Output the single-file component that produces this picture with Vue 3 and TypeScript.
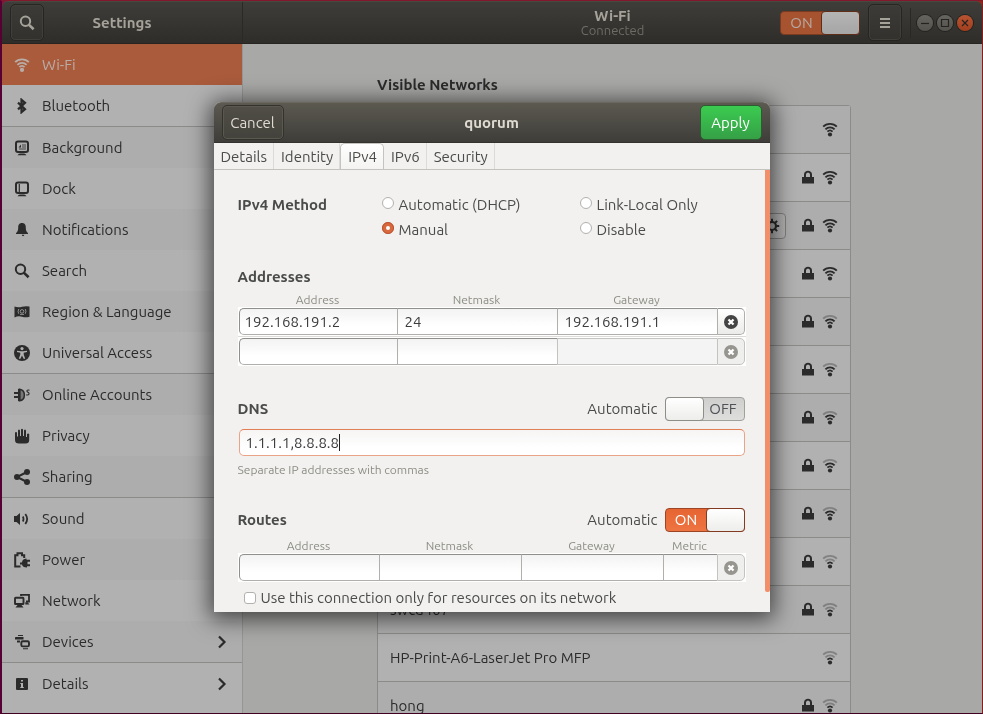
<script setup lang="ts">
import { ref } from 'vue'

interface Panel { name: string; icon: string; more?: boolean; last?: boolean }
interface Network { name?: string; locked: boolean; level: number; active?: boolean }

const panels: Panel[] = [
  { name: 'Wi-Fi', icon: 'wifi' },
  { name: 'Bluetooth', icon: 'bluetooth', last: true },
  { name: 'Background', icon: 'background' },
  { name: 'Dock', icon: 'dock' },
  { name: 'Notifications', icon: 'bell' },
  { name: 'Search', icon: 'search' },
  { name: 'Region & Language', icon: 'flag' },
  { name: 'Universal Access', icon: 'access', last: true },
  { name: 'Online Accounts', icon: 'accounts' },
  { name: 'Privacy', icon: 'hand' },
  { name: 'Sharing', icon: 'share', last: true },
  { name: 'Sound', icon: 'sound' },
  { name: 'Power', icon: 'power' },
  { name: 'Network', icon: 'network' },
  { name: 'Devices', icon: 'devices', more: true, last: true },
  { name: 'Details', icon: 'info', more: true },
]
const selected = ref('Wi-Fi')

const networks: Network[] = [
  { locked: false, level: 3 },
  { locked: true, level: 3 },
  { locked: true, level: 3, active: true },
  { locked: true, level: 3 },
  { locked: true, level: 2 },
  { locked: true, level: 2 },
  { locked: true, level: 2 },
  { locked: true, level: 2 },
  { locked: true, level: 2 },
  { locked: true, level: 1 },
  { name: 'swcd407', locked: true, level: 1 },
  { name: 'HP-Print-A6-LaserJet Pro MFP', locked: false, level: 1 },
  { name: 'hong', locked: true, level: 1 },
]

const tabs = ['Details', 'Identity', 'IPv4', 'IPv6', 'Security']
const tab = ref('IPv4')
const methods = ['Automatic (DHCP)', 'Link-Local Only', 'Manual', 'Disable']
const method = ref('Manual')

const addressColumns = ['Address', 'Netmask', 'Gateway']
const addresses = ref([
  ['192.168.191.2', '24', '192.168.191.1'],
  ['', '', ''],
])
const routeColumns = ['Address', 'Netmask', 'Gateway', 'Metric']
const route = ref(['', '', '', ''])

const wifiOn = ref(true)
const dns = ref('1.1.1.1,8.8.8.8')
const dnsAuto = ref(false)
const routesAuto = ref(true)
const onlyOwn = ref(false)
</script>

<template>
  <svg class="sprite" aria-hidden="true">
    <symbol id="wifi" viewBox="0 0 16 16">
      <g fill="none" stroke="currentColor" stroke-width="1.8">
        <path d="M1.2 5.2C4.6 1.4 11.4 1.4 14.8 5.2" />
        <path d="M3.4 7.9C6 5.2 10 5.2 12.6 7.9" />
        <path d="M5.4 10.2C7 8.6 9 8.6 10.6 10.2" />
      </g>
      <circle cx="8" cy="12.9" r="2.1" fill="currentColor" />
    </symbol>
    <symbol id="bluetooth" viewBox="0 0 16 16">
      <path d="M4 4.6L11 11.2L7.5 14.2V1.8L11 4.8L4 11.4" fill="none" stroke="currentColor" stroke-width="2.2" />
    </symbol>
    <symbol id="background" viewBox="0 0 16 16">
      <rect x="2" y="1.6" width="12" height="10.4" rx="2" fill="none" stroke="currentColor" stroke-width="2" />
      <path d="M8 4H12V10H5V8H8Z" opacity=".4" fill="currentColor" />
      <path d="M4.5 7.5L7 4.5V7.5ZM3.5 15.2Q4.5 13.5 6 13.5H10Q11.5 13.5 12.5 15.2Z" fill="currentColor" />
    </symbol>
    <symbol id="dock" viewBox="0 0 16 16">
      <rect x="2" y="1.6" width="12" height="10.4" rx="2" fill="none" stroke="currentColor" stroke-width="2" />
      <path d="M5.3 3V11" stroke="currentColor" stroke-width="1.2" />
      <path d="M3.5 15.2Q4.5 13.5 6 13.5H10Q11.5 13.5 12.5 15.2Z" fill="currentColor" />
    </symbol>
    <symbol id="bell" viewBox="0 0 16 16">
      <path d="M8 1C5 1 4.2 3.2 4.2 5.5C4.2 9 3.4 9.8 2 11V12H14V11C12.6 9.8 11.8 9 11.8 5.5C11.8 3.2 11 1 8 1ZM7.8 12.8H10.4Q10.2 14.2 9 14.2Q8 14.2 7.800 12.800Z" fill="currentColor" />
    </symbol>
    <symbol id="search" viewBox="0 0 16 16">
      <circle cx="6.5" cy="6.3" r="4.7" fill="none" stroke="currentColor" stroke-width="2" />
      <path d="M9.8 9.6L14.6 14.3" stroke="currentColor" stroke-width="2.6" />
    </symbol>
    <symbol id="flag" viewBox="0 0 16 16">
      <path d="M.5 2.5Q4 4 8 2.8T15.5 2.6V12.7Q12 13.8 8 12.7T.5 13.5Z" fill="currentColor" />
      <g fill="none" stroke="#aaa" stroke-width=".8">
        <circle cx="8" cy="7.4" r="1.8" />
        <path d="M4.8 5Q3.300 7.400 4.800 9.800M11.200 5Q12.700 7.400 11.200 9.800M6 10.400H10" />
      </g>
    </symbol>
    <symbol id="access" viewBox="0 0 16 16">
      <circle cx="8" cy="8" r="8" fill="currentColor" />
      <circle cx="8" cy="3.6" r="1.6" fill="#b1b1b1" />
      <path d="M3 5.700L6.800 6.200H9.200L13 5.700V7.100L9.700 7.800V9.500L11.200 13.700H9.600L8 10.500L6.400 13.700H4.800L6.300 9.500V7.800L3 7.100Z" fill="#b1b1b1" />
    </symbol>
    <symbol id="accounts" viewBox="0 0 16 16">
      <path d="M5.5 2.200V13.800C12 13 12 3 5.500 2.200Z" fill="#777" stroke="currentColor" stroke-width="1.500" />
      <path d="M0 5H5V7H0ZM0 9H5V11H0ZM4 2H6.500V14H4Z" fill="currentColor" />
      <path d="M15.500 3.200C13 2.400 12 4.300 14 5.300S15 8.700 12.200 7.700" fill="none" stroke="currentColor" stroke-width="1.100" />
    </symbol>
    <symbol id="hand" viewBox="0 0 16 16">
      <path d="M1 4.500Q2 3.500 3 4.500V8.500H4V2.500Q5 .6 6 2.500V8H7V1.500Q8 .2 9 1.500V8H10V2.500Q11 .6 12 2.500V9H13V6Q14.200 4.800 15.200 6V12Q15.200 15.500 11.500 15.500H5Q1 15.500 1 12Z" fill="currentColor" />
    </symbol>
    <symbol id="share" viewBox="0 0 16 16">
      <path d="M13 3L3 8L13 13" fill="none" stroke="currentColor" stroke-width="2" />
      <g fill="currentColor"><circle cx="3" cy="8" r="3" /><circle cx="13" cy="3" r="3" /><circle cx="13" cy="13" r="3" /></g>
    </symbol>
    <symbol id="sound" viewBox="0 0 16 16">
      <path d="M0 5H2.500L6 2V14L2.500 11H0Z" fill="currentColor" />
      <path d="M8.800 5.500Q10.200 8 8.800 10.500M11.300 3Q15 8 11.300 13" fill="none" stroke="currentColor" stroke-width="1.800" />
    </symbol>
    <symbol id="power" viewBox="0 0 16 16">
      <path d="M6.500 14.500H1.200V3.200H3.500V1.200H8V3.200H10.200V6" fill="none" stroke="currentColor" stroke-width="2" />
      <path d="M6 10.500H8Q8 7 12.500 6.500V7.800H16V9.800H13.500V12.200H16V14.200H13V15.500Q8.500 15.500 8 12.500H6Z" fill="currentColor" />
    </symbol>
    <symbol id="network" viewBox="0 0 16 16">
      <path d="M7 3V1.800H15V8.500H12" fill="none" stroke="currentColor" stroke-width="1.800" />
      <rect x="1" y="4.800" width="8.500" height="6.200" rx=".6" fill="none" stroke="currentColor" stroke-width="1.900" />
      <path d="M3.500 12H7.500L9.500 14.500H1.500ZM11.300 9.200H13.500L15.500 11.500H11.300Z" fill="currentColor" />
    </symbol>
    <symbol id="devices" viewBox="0 0 16 16">
      <path d="M4 1H9V2H4ZM1 3.500Q1 3 2 3H9.500V5.500H1ZM3 6.500H6V8.500H3ZM9 14.200H14V15.200H9Z" fill="currentColor" />
      <rect x="7.300" y="7.200" width="7.700" height="5.200" rx="1.500" fill="none" stroke="currentColor" stroke-width="1.900" />
    </symbol>
    <symbol id="info" viewBox="0 0 16 16">
      <rect x="2" y="2" width="12" height="12" rx="1" fill="currentColor" />
      <path d="M7 4H9V5.600H7ZM6.300 7H9V11H9.800V12H6.300V11H7V8H6.300Z" fill="#b1b1b1" />
    </symbol>
    <symbol id="chevron" viewBox="0 0 16 16">
      <path d="M5 2.500L10.500 8L5 13.500" fill="none" stroke="currentColor" stroke-width="2.200" />
    </symbol>
    <symbol id="lock" viewBox="0 0 16 16">
      <path d="M2 7H14V13.500H2ZM4 7V4.500C4 -.4 12 -.4 12 4.500V7H10V4.500C10 2.300 6 2.300 6 4.500V7Z" fill="currentColor" />
    </symbol>
    <symbol id="gear" viewBox="0 0 16 16">
      <circle cx="8" cy="8" r="4" fill="none" stroke="currentColor" stroke-width="2.200" />
      <path d="M8 .8V4M8 12V15.200M.8 8H4M12 8H15.200M2.900 2.900L5.200 5.200M10.800 10.800L13.100 13.100M2.900 13.100L5.200 10.800M10.800 5.200L13.100 2.900" stroke="currentColor" stroke-width="2" />
    </symbol>
    <symbol id="remove" viewBox="0 0 16 16">
      <circle cx="8" cy="8" r="7" fill="currentColor" />
      <path d="M5.500 5.500L10.500 10.500M10.500 5.500L5.500 10.500" stroke="#fff" stroke-width="2.200" />
    </symbol>
  </svg>

  <div class="window">
    <header class="bar">
      <div class="bar-side">
        <button class="tool" aria-label="Search"><svg class="icon"><use href="#search" /></svg></button>
        <h1>Settings</h1>
      </div>
      <div class="bar-main">
        <div class="bar-title"><strong>Wi-Fi</strong><span>Connected</span></div>
        <div class="bar-tools">
          <button class="switch dim" :class="{ on: wifiOn }" role="switch" :aria-checked="wifiOn" aria-label="Wi-Fi" @click="wifiOn = !wifiOn">
            <span class="state">{{ wifiOn ? 'ON' : 'OFF' }}</span><span class="knob"></span>
          </button>
          <button class="tool" aria-label="Menu">
            <svg class="icon" viewBox="0 0 16 16"><path d="M3 4H13M3 8H13M3 12H13" stroke="currentColor" stroke-width="2" /></svg>
          </button>
          <div class="controls">
            <button aria-label="Minimize"><svg viewBox="0 0 16 16"><path d="M4 8.500H12" /></svg></button>
            <button aria-label="Maximize"><svg viewBox="0 0 16 16"><path d="M4.500 4.500H11.500V11.500H4.500Z" /></svg></button>
            <button class="close" aria-label="Close"><svg viewBox="0 0 16 16"><path d="M5 5L11 11M11 5L5 11" /></svg></button>
          </div>
        </div>
      </div>
    </header>

    <div class="body">
      <nav class="sidebar">
        <a
          v-for="p in panels"
          :key="p.name"
          href="#"
          :class="{ selected: p.name === selected, last: p.last }"
          @click.prevent="selected = p.name"
        >
          <svg class="icon"><use :href="'#' + p.icon" /></svg>
          <span>{{ p.name }}</span>
          <svg v-if="p.more" class="icon more"><use href="#chevron" /></svg>
        </a>
      </nav>
      <main>
        <section class="visible">
          <h2>Visible Networks</h2>
          <ul>
            <li v-for="(n, i) in networks" :key="i">
              <span class="ssid">{{ n.name }}</span>
              <button v-if="n.active" class="options" aria-label="Options"><svg class="icon"><use href="#gear" /></svg></button>
              <svg v-if="n.locked" class="icon"><use href="#lock" /></svg>
              <svg class="icon" viewBox="0 0 16 16">
                <g fill="none" stroke="currentColor" stroke-width="1.800">
                  <path :class="{ weak: n.level < 3 }" d="M1.200 4.700C4.600 .9 11.400 .9 14.800 4.700" />
                  <path :class="{ weak: n.level < 2 }" d="M3.400 7.400C6 4.700 10 4.700 12.600 7.400" />
                  <path d="M5.400 9.700C7 8.100 9 8.100 10.600 9.700" />
                </g>
                <circle cx="8" cy="12.500" r="2.100" fill="currentColor" />
              </svg>
            </li>
          </ul>
        </section>
      </main>
    </div>
  </div>

  <div class="overlay">
    <div class="dialog" role="dialog" aria-labelledby="dialog-title">
      <header class="dialog-bar">
        <button class="cancel">Cancel</button>
        <h2 id="dialog-title">quorum</h2>
        <button class="apply">Apply</button>
      </header>
      <div class="tabs" role="tablist">
        <button v-for="t in tabs" :key="t" role="tab" :aria-selected="t === tab" :class="{ current: t === tab }" @click="tab = t">{{ t }}</button>
      </div>
      <div class="pane">
        <form class="form" @submit.prevent>
          <div class="methods" role="radiogroup" aria-labelledby="method-title">
            <h3 id="method-title">IPv4 Method</h3>
            <div class="choices">
              <label v-for="m in methods" :key="m"><input v-model="method" type="radio" name="method" :value="m" />{{ m }}</label>
            </div>
          </div>

          <h3 class="addresses-title">Addresses</h3>
          <div class="columns three"><span v-for="c in addressColumns" :key="c">{{ c }}</span></div>
          <div class="list">
            <div v-for="(row, r) in addresses" :key="r" class="columns three entry-row">
              <input v-for="(c, k) in addressColumns" :key="c" v-model="row[k]" type="text" :aria-label="c" :disabled="r === 1 && k === 2" />
              <button type="button" aria-label="Remove address" :disabled="r === 1"><svg class="icon"><use href="#remove" /></svg></button>
            </div>
          </div>

          <div class="section-head dns-head">
            <h3>DNS</h3>
            <span id="dns-auto">Automatic</span>
            <button type="button" class="switch" :class="{ on: dnsAuto }" role="switch" :aria-checked="dnsAuto" aria-labelledby="dns-auto" @click="dnsAuto = !dnsAuto">
              <span class="state">{{ dnsAuto ? 'ON' : 'OFF' }}</span><span class="knob"></span>
            </button>
          </div>
          <label class="dns-entry"><input v-model="dns" type="text" aria-label="DNS" /><span class="caret"></span></label>
          <p class="hint">Separate IP addresses with commas</p>

          <div class="section-head routes-head">
            <h3>Routes</h3>
            <span id="routes-auto">Automatic</span>
            <button type="button" class="switch" :class="{ on: routesAuto }" role="switch" :aria-checked="routesAuto" aria-labelledby="routes-auto" @click="routesAuto = !routesAuto">
              <span class="state">{{ routesAuto ? 'ON' : 'OFF' }}</span><span class="knob"></span>
            </button>
          </div>
          <div class="columns four route-columns"><span v-for="c in routeColumns" :key="c">{{ c }}</span></div>
          <div class="list">
            <div class="columns four entry-row">
              <input v-for="(c, k) in routeColumns" :key="c" v-model="route[k]" type="text" :aria-label="'Route ' + c" />
              <button type="button" aria-label="Remove route" disabled><svg class="icon"><use href="#remove" /></svg></button>
            </div>
          </div>
          <label class="only"><input v-model="onlyOwn" type="checkbox" />Use this connection only for resources on its network</label>
        </form>
        <div class="track"><div class="thumb"></div></div>
      </div>
    </div>
  </div>
</template>

<style>
body {
  height: 100vh;
  overflow: hidden;
  background: linear-gradient(100deg, #82173c 0, #7c1a2c 40%, #9a2a18 100%);
  font: 15px/20px Ubuntu, "Noto Sans", sans-serif;
}
</style>

<style scoped>
* { box-sizing: border-box; }
h1, h2, h3, p, ul { margin: 0; padding: 0; }
h1, h2, h3 { font-size: 15px; font-weight: 700; }
button, input { font: inherit; color: inherit; padding: 0; margin: 0; outline: none; }
.sprite { position: absolute; width: 0; height: 0; }
.icon { width: 16px; height: 16px; flex: none; display: block; }

.window {
  position: fixed;
  inset: 0;
  display: flex;
  flex-direction: column;
  border: solid;
  border-width: 1px 1px 1px 2px;
  border-color: #82182c #82201e #400022 #560034;
}
.bar {
  flex: none;
  display: flex;
  height: 43px;
  background: linear-gradient(#3e3d39, #2e2d29);
  border-top: 1px solid #484740;
  border-bottom: 1px solid #262521;
  border-radius: 6px 6px 0 0;
  color: #a5a299;
}
.bar-side {
  flex: none;
  display: grid;
  grid-template-columns: 34px 1fr 34px;
  align-items: center;
  width: 241px;
  padding: 0 8px;
  border-right: 1px solid #2a2925;
}
.bar-side h1 { text-align: center; }
.tool {
  display: grid;
  place-items: center;
  width: 34px;
  height: 37px;
  background: linear-gradient(#3c3b37, #32312d);
  border: 1px solid #262521;
  border-radius: 5px;
  box-shadow: inset 0 0 0 1px #403f3a;
}
.bar-main { flex: 1; display: grid; grid-template-columns: 1fr auto 1fr; align-items: center; }
.bar-title { grid-column: 2; display: flex; flex-direction: column; align-items: center; line-height: 15px; }
.bar-title span { font-size: 13px; color: #6e6c65; }
.bar-tools { display: flex; justify-content: flex-end; align-items: center; gap: 8px; padding-right: 9px; }
.controls { display: flex; gap: 4px; padding-left: 6px; border-left: 1px solid #292824; height: 30px; align-items: center; }
.controls button { width: 16px; height: 16px; border: 0; border-radius: 50%; background: linear-gradient(#65645e, #53524d); box-shadow: 0 0 0 1px #23221f; }
.controls .close { background: linear-gradient(#b95432, #a03e1d); }
.controls svg { display: block; width: 16px; height: 16px; fill: none; stroke: #24231f; stroke-width: 1.2; }

.switch {
  flex: none;
  display: flex;
  align-items: center;
  width: 80px;
  height: 24px;
  padding: 0;
  border: 1px solid #a0a09c;
  border-radius: 4px;
  background: linear-gradient(#cfcfcd, #dededc);
  color: #4e5257;
  flex-direction: row-reverse;
}
.switch .state { flex: 1; text-align: center; }
.switch .knob { width: 39px; height: 24px; margin: -1px; border: 1px solid #8e8e88; border-radius: 4px; background: linear-gradient(#fff, #ededeb); }
.switch.on { flex-direction: row; background: linear-gradient(#e66532, #ee7442); border-color: #9e4523; color: #fff; }
.switch.on .knob { border-color: #823a20; }
.switch.dim { background: #a8532f; border-color: #7c3a20; color: #b5a8a0; }
.switch.dim .knob { background: linear-gradient(#b4b4b4, #a6a6a6); border-color: #5f2c18; }

.body { flex: 1; min-height: 0; display: flex; }
.sidebar { flex: none; width: 241px; background: #b1b1b1; border-right: 1px solid #969694; color: #2b2b2b; overflow: hidden; }
.sidebar a {
  display: flex;
  align-items: center;
  gap: 12px;
  height: 41px;
  padding: 0 12px;
  color: inherit;
  text-decoration: none;
}
.sidebar a:nth-child(odd) { background: #adadad; }
.sidebar a.last { height: 42px; border-bottom: 1px solid #8b8b8a; }
.sidebar a.selected { background: #a95b3c; color: #b9aca6; }
.more { margin-left: auto; }
main { flex: 1; background: #a8a8a6; padding-left: 3px; overflow: hidden; }
.visible { width: 474px; max-width: 90%; margin: 0 auto; padding-top: 31px; color: #2b2b2b; }
.visible ul { margin-top: 10px; list-style: none; border: 1px solid #8b8b89; border-radius: 3px 3px 0 0; }
.visible li { display: flex; align-items: center; gap: 6px; height: 48px; padding: 0 12px; background: #b1b1b1; border-bottom: 1px solid #8b8b89; }
.visible li:nth-child(odd) { background: #adadad; }
.ssid { flex: 1; }
.options { display: grid; place-items: center; width: 28px; height: 26px; margin-right: 8px; background: #b1b1b1; border: 1px solid #7f7f7d; border-radius: 4px; }
.weak { opacity: .35; }

.overlay { position: fixed; inset: 0; display: grid; place-items: center; }
.dialog {
  display: flex;
  flex-direction: column;
  width: 556px;
  max-width: 100%;
  max-height: calc(100vh - 204px);
  background: #f2f1f0;
  border-radius: 7px 7px 0 0;
  box-shadow: 0 3px 22px 4px rgba(0, 0, 0, .62);
  color: #4a4c49;
}
.dialog-bar {
  flex: none;
  display: grid;
  grid-template-columns: 1fr auto 1fr;
  align-items: center;
  height: 41px;
  padding: 0 8px;
  background: linear-gradient(#5b5950, #3e3d39);
  border-top: 1px solid #6a685e;
  border-bottom: 1px solid #33322e;
  border-radius: 7px 7px 0 0;
  color: #dfdbd2;
}
.dialog-bar button { height: 35px; width: 62px; border-radius: 5px; }
.cancel { background: linear-gradient(#504e46, #43423c); border: 1px solid #33322d; box-shadow: inset 0 0 0 1px #5a584f; }
.apply { justify-self: end; background: linear-gradient(#3bcb50, #35a046); border: 1px solid #2d5c30; color: #fff; }
.tabs { flex: none; display: flex; height: 27px; border-bottom: 1px solid #c4c3c0; }
.tabs button { height: 26px; padding: 2px 6px 0 7px; border: 0; border-right: 1px solid #dcdbd9; background: none; }
.tabs .current { padding-top: 1px; background: linear-gradient(#fff, #f4f3f2); border: 1px solid #c4c3c0; border-bottom: 0; border-radius: 5px 5px 0 0; }

.pane { flex: 1; min-height: 0; display: flex; overflow: hidden; }
.form { flex: 1; min-width: 0; padding: 22px 19px 24px 24px; }
.track { width: 5px; padding-bottom: 20px; display: flex; }
.thumb { flex: 1; background: #f28e69; border-radius: 0 0 2px 2px; }
.methods { display: grid; grid-template-columns: 144px 1fr; line-height: 25px; }
.choices { display: grid; grid-template-columns: 198px 1fr; }
label { display: flex; align-items: center; gap: 5px; }
input[type='radio'], input[type='checkbox'] { appearance: none; flex: none; width: 12px; height: 12px; border: 1px solid #b2b1ae; border-radius: 50%; background: #fff; }
input[type='radio'] { margin-bottom: 3px; }
input[type='radio']:checked { border: 4px solid #d9683f; outline: 1px solid #b75532; outline-offset: -1px; }
input[type='checkbox'] { border-radius: 3px; }
.addresses-title { margin-top: 23px; line-height: 24px; }
.columns { display: grid; margin-top: 4px; padding: 0 1px; font-size: 12px; line-height: 14px; color: #8c8e84; text-align: center; }
.three { grid-template-columns: 158px 1fr 1fr 28px; }
.four { grid-template-columns: 140px 1fr 1fr 54px 28px; }
.list { background: #fff; }
.entry-row { margin: 0; padding: 1px; font-size: 15px; line-height: 20px; color: #3c3c3c; text-align: left; }
.entry-row + .entry-row { border-top: 1px solid #dddcda; }
.entry-row input, .entry-row button { width: 100%; min-width: 0; height: 27px; border: 1px solid #b0afac; border-top-color: #8f8f8b; background: linear-gradient(#f3f3f3, #fff 70%); }
.entry-row input { padding: 0 7px; border-right: 0; border-radius: 0; }
.entry-row input:first-child { padding-left: 5px; border-left-color: #8f8f8b; border-radius: 5px 0 0 5px; }
.entry-row button { display: grid; place-items: center; border-radius: 0 5px 5px 0; background: linear-gradient(#fff, #ebebea); color: #444; }
.entry-row input:disabled, .entry-row button:disabled { background: #f4f4f4; border-color: #c4c3c0; }
.entry-row button:disabled { background: #efefee; color: #96958f; }
.section-head { display: flex; align-items: center; gap: 7px; height: 24px; }
.section-head h3 { flex: 1; }
.dns-head { margin-top: 31px; }
.routes-head { margin-top: 30px; }
.section-head .switch { margin-right: 1px; }
.dns-entry { height: 27px; gap: 0; margin: 8px 1px 0; padding: 0 6px; border: 1px solid #e9a386; border-top-color: #e27e56; border-radius: 5px; background: linear-gradient(#f6f5f4, #fff 70%); color: #3c3c3c; }
.dns-entry input { field-sizing: content; border: 0; background: none; caret-color: transparent; }
.caret { width: 1px; height: 17px; background: #222; }
.hint { margin-top: 6px; font-size: 12px; line-height: 16px; color: #8c8e84; }
.route-columns { margin-top: 7px; }
.only { margin: 6px 6px 0; }
</style>
